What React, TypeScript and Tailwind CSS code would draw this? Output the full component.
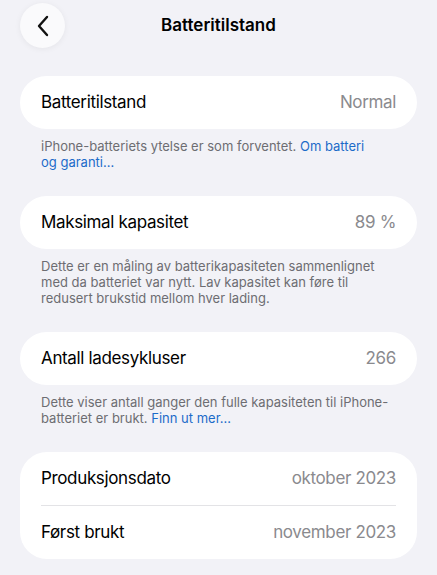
import React from 'react';

const Row: React.FC<{ label: string; value: string }> = ({ label, value }) => (
  <div className="flex h-[53px] items-center justify-between px-[21px] tracking-[-0.35px]">
    <span className="text-[17px] text-black">{label}</span>
    <span className="text-[17px] text-[#8a8a8e]">{value}</span>
  </div>
);

const Footer: React.FC<{ children: React.ReactNode }> = ({ children }) => (
  <p className="px-[21px] pt-[9px] pb-[26px] text-[13px] leading-4 text-[#6d6d72]">{children}</p>
);

const Link: React.FC<{ children: React.ReactNode }> = ({ children }) => (
  <span className="text-[#1c6bc9]">{children}</span>
);

export default function App() {
  return (
    <div
      className="min-h-[575px] w-full bg-[#f2f2f7] px-5"
      style={{ fontFamily: 'Inter, "Noto Sans", sans-serif' }}
    >
      <header className="relative flex h-[76px] items-start justify-center pt-[3px]">
        <button className="absolute left-0 top-[3px] flex h-[45px] w-[45px] items-center justify-center rounded-full bg-[#fafafc] shadow-[0_1px_6px_rgba(0,0,0,0.06)]">
          <svg width="14" height="22" viewBox="0 0 14 22" fill="none">
            <path d="M11 2L3 11l8 9" stroke="#111" strokeWidth="2.4" strokeLinecap="round" strokeLinejoin="round" />
          </svg>
        </button>
        <h1 className="mt-[10px] text-[17px] font-semibold text-black">Batteritilstand</h1>
      </header>

      <section className="rounded-[27px] bg-white">
        <Row label="Batteritilstand" value="Normal" />
      </section>
      <Footer>
        iPhone-batteriets ytelse er som forventet. <Link>Om batteri</Link>
        <br />
        <Link>og garanti…</Link>
      </Footer>

      <section className="rounded-[27px] bg-white">
        <Row label="Maksimal kapasitet" value="89 %" />
      </section>
      <Footer>
        Dette er en måling av batterikapasiteten sammenlignet
        <br />
        med da batteriet var nytt. Lav kapasitet kan føre til
        <br />
        redusert brukstid mellom hver lading.
      </Footer>

      <section className="rounded-[27px] bg-white">
        <Row label="Antall ladesykluser" value="266" />
      </section>
      <Footer>
        Dette viser antall ganger den fulle kapasiteten til iPhone-
        <br />
        batteriet er brukt. <Link>Finn ut mer…</Link>
      </Footer>

      <section className="rounded-[27px] bg-white">
        <Row label="Produksjonsdato" value="oktober 2023" />
        <div className="mx-[21px] h-px bg-[#e3e3e6]" />
        <Row label="Først brukt" value="november 2023" />
      </section>
    </div>
  );
}
